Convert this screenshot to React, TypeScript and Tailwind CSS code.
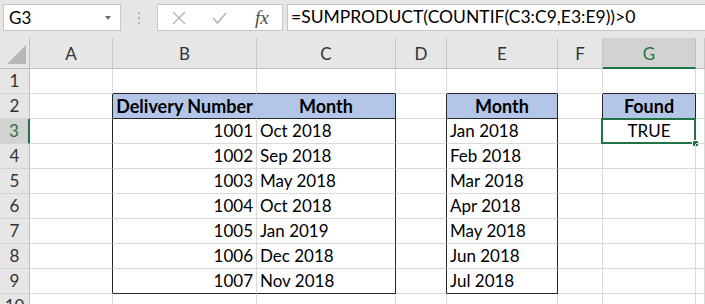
import React from "react";
import clsx from "clsx";

const font = "font-['Lato','Liberation_Sans',sans-serif]";

type Edge = "grid" | "dark" | "blue" | "none";

interface CellProps {
  r?: Edge;
  b?: Edge;
  blue?: boolean;
  align?: "left" | "right" | "center";
  bold?: boolean;
  children?: React.ReactNode;
  extra?: React.ReactNode;
}

const Cell: React.FC<CellProps> = ({ r = "grid", b = "grid", blue, align = "left", bold, children, extra }) => (
  <div
    className={clsx(
      "relative h-[25px] border-r border-b flex items-center whitespace-nowrap px-[3px] text-black",
      r === "dark" && "border-r-[#262626]",
      r === "grid" && "border-r-[#dadada]",
      r === "blue" && "border-r-[#b4c6e7]",
      b === "dark" && "border-b-[#262626]",
      b === "grid" && "border-b-[#dadada]",
      blue && "bg-[#b4c6e7]",
      align === "right" && "justify-end",
      align === "center" && "justify-center",
      bold ? "font-bold text-[18px]" : "text-[17px]"
    )}
  >
    {children}
    {extra}
  </div>
);

const RowHead: React.FC<{ n: number; sel?: boolean }> = ({ n, sel }) => (
  <div
    className={clsx(
      "h-[25px] flex items-center justify-center border-b border-b-[#d4d4d4] text-[17px]",
      sel
        ? "bg-[#d2d2d2] text-[#217346] border-r-2 border-r-[#217346]"
        : "bg-[#e6e6e6] text-[#333] border-r border-r-[#bdbdbd]"
    )}
  >
    {n}
  </div>
);

const deliveries = [
  ["1001", "Oct 2018"],
  ["1002", "Sep 2018"],
  ["1003", "May 2018"],
  ["1004", "Oct 2018"],
  ["1005", "Jan 2019"],
  ["1006", "Dec 2018"],
  ["1007", "Nov 2018"],
];

const months = ["Jan 2018", "Feb 2018", "Mar 2018", "Apr 2018", "May 2018", "Jun 2018", "Jul 2018"];

const colLetters = ["A", "B", "C", "D", "E", "F", "G", ""];

export default function App() {
  return (
    <div className={clsx("w-[705px] h-[304px] overflow-hidden bg-white", font)}>
      {/* Formula bar */}
      <div className="h-[38px] bg-[#e6e6e6] flex items-start pt-[4px] pl-[3px]">
        <div className="w-[118px] h-[27px] bg-white border border-[#c6c6c6] flex items-center justify-between pl-[5px] pr-[9px] text-[17px] text-black">
          <span>G3</span>
          <span className="w-0 h-0 border-l-[3.5px] border-r-[3.5px] border-t-[4px] border-l-transparent border-r-transparent border-t-[#6b6b6b]" />
        </div>
        <div className="w-[36px] h-[27px] flex flex-col items-center justify-center gap-[3px]">
          <span className="w-[2px] h-[2px] bg-[#b5b5b5]" />
          <span className="w-[2px] h-[2px] bg-[#b5b5b5]" />
          <span className="w-[2px] h-[2px] bg-[#b5b5b5]" />
        </div>
        <div className="w-[126px] h-[27px] bg-white border border-[#c6c6c6] flex items-center">
          <svg width="40" height="25" viewBox="0 0 40 25" className="ml-[1px]">
            <path d="M14 7 L26 19 M26 7 L14 19" stroke="#b3b3b3" strokeWidth="1.3" fill="none" />
          </svg>
          <svg width="40" height="25" viewBox="0 0 40 25">
            <path d="M14 13 L18.5 18 L27 8" stroke="#b3b3b3" strokeWidth="1.6" fill="none" />
          </svg>
          <span className="ml-[16px] font-['Liberation_Serif',serif] italic text-[19px] text-[#4a4a4a] leading-none">
            fx
          </span>
        </div>
        <div className="ml-[4px] flex-1 h-[27px] bg-white border border-r-0 border-[#c6c6c6] flex items-center pl-[3px] text-[17.5px] text-black whitespace-nowrap">
          =SUMPRODUCT(COUNTIF(C3:C9,E3:E9))&gt;0
        </div>
      </div>

      {/* Grid */}
      <div className="grid grid-cols-[30px_83px_144px_139px_51px_111px_45px_93px_1fr]">
        {/* column headers */}
        <div className="relative h-[31px] bg-[#e6e6e6] border-r border-b border-[#bdbdbd]">
          <span className="absolute right-[3px] bottom-[4px] w-0 h-0 border-l-[19px] border-b-[19px] border-l-transparent border-b-[#b7b7b7]" />
        </div>
        {colLetters.map((c, i) =>
          c === "G" ? (
            <div
              key={i}
              className="h-[31px] bg-[#d2d2d2] border-r border-r-[#bdbdbd] border-b-2 border-b-[#217346] flex items-center justify-center pt-[2px] text-[17px] text-[#217346]"
            >
              {c}
            </div>
          ) : (
            <div
              key={i}
              className="h-[31px] bg-[#e6e6e6] border-r border-r-[#c6c6c6] border-b border-b-[#bdbdbd] flex items-center justify-center pt-[2px] text-[17px] text-[#333]"
            >
              {c}
            </div>
          )
        )}

        {/* row 1 */}
        <RowHead n={1} />
        <Cell />
        <Cell b="dark" />
        <Cell b="dark" />
        <Cell />
        <Cell b="dark" />
        <Cell />
        <Cell b="dark" />
        <Cell />

        {/* row 2 */}
        <RowHead n={2} />
        <Cell r="dark" />
        <Cell r="blue" b="dark" blue bold align="center">
          Delivery Number
        </Cell>
        <Cell r="dark" b="dark" blue bold align="center">
          Month
        </Cell>
        <Cell r="dark" />
        <Cell r="dark" b="dark" blue bold align="center">
          Month
        </Cell>
        <Cell r="dark" />
        <Cell r="dark" b="dark" blue bold align="center">
          Found
        </Cell>
        <Cell />

        {/* rows 3-9 */}
        {deliveries.map(([num, month], i) => {
          const last = i === deliveries.length - 1;
          const rowNo = i + 3;
          return (
            <React.Fragment key={rowNo}>
              <RowHead n={rowNo} sel={rowNo === 3} />
              <Cell r="dark" />
              <Cell b={last ? "dark" : "grid"} align="right">
                {num}
              </Cell>
              <Cell r="dark" b={last ? "dark" : "grid"}>
                {month}
              </Cell>
              <Cell r="dark" />
              <Cell r="dark" b={last ? "dark" : "grid"}>
                {months[i]}
              </Cell>
              <Cell />
              {rowNo === 3 ? (
                <Cell
                  align="center"
                  extra={
                    <>
                      <span className="absolute left-[-2px] top-[-1px] right-[-1px] bottom-[-1px] border-2 border-[#217346] pointer-events-none" />
                      <span className="absolute right-[-4px] bottom-[-4px] w-[7px] h-[7px] bg-[#217346] border border-white" />
                    </>
                  }
                >
                  TRUE
                </Cell>
              ) : (
                <Cell />
              )}
              <Cell />
            </React.Fragment>
          );
        })}

        {/* row 10 */}
        <RowHead n={10} />
        <Cell />
        <Cell />
        <Cell />
        <Cell />
        <Cell />
        <Cell />
        <Cell />
        <Cell />
      </div>
    </div>
  );
}
